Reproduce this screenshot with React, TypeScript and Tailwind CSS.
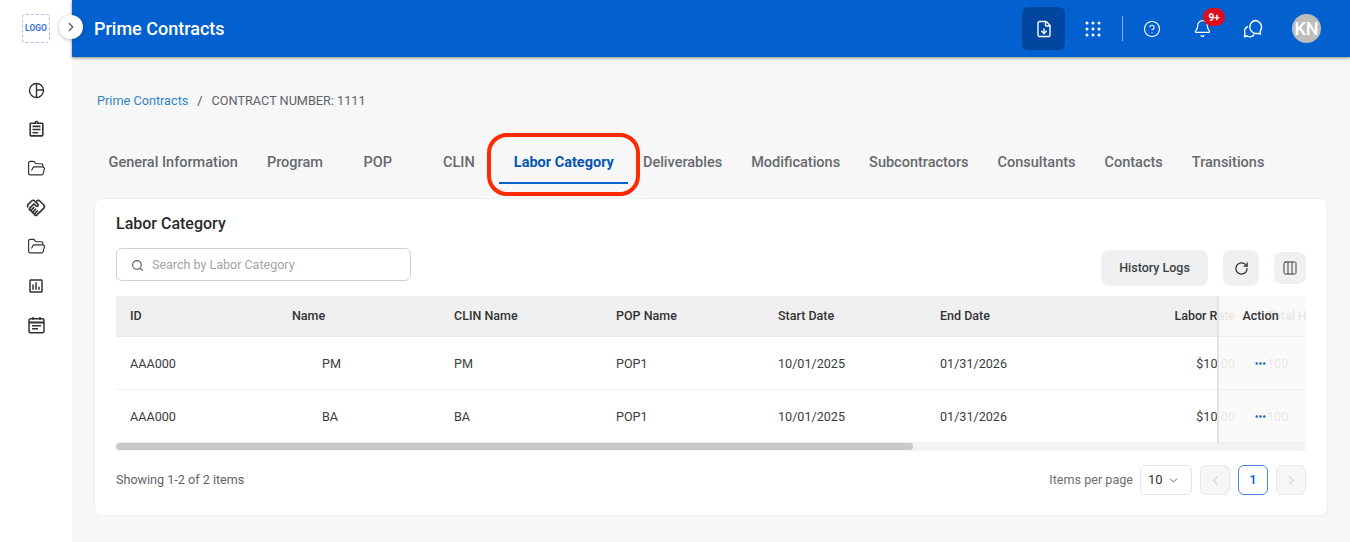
import { ChevronRight, ChevronLeft, ChevronDown, FolderOpen, Search, RotateCw, Columns3, FileDown, CircleHelp, Bell, Ellipsis } from 'lucide-react';
import { MdOutlineAssessment, MdOutlineAssignment, MdOutlineHandshake } from 'react-icons/md';

const tabs = ['General Information', 'Program', 'POP', 'CLIN', 'Labor Category', 'Deliverables', 'Modifications', 'Subcontractors', 'Consultants', 'Contacts', 'Transitions'];

const rows = [
  { id: 'AAA000', name: 'PM', clin: 'PM' },
  { id: 'AAA000', name: 'BA', clin: 'BA' },
];

function PieIcon() {
  return (
    <svg width="17" height="17" viewBox="0 0 17 17" fill="none" stroke="#333" strokeWidth="1.4">
      <circle cx="8.5" cy="8.5" r="7" />
      <path d="M8.5 1.5v14M8.5 8h7" />
    </svg>
  );
}

function CalendarIcon() {
  return (
    <svg width="17" height="18" viewBox="0 0 17 18" fill="none" stroke="#333" strokeWidth="1.5">
      <rect x="1" y="2.8" width="15" height="14" rx="1.5" />
      <path d="M1 6.5h15" strokeWidth="2" />
      <path d="M5 1v3M12 1v3M4 9.8h9M4 12.8h6" />
    </svg>
  );
}

function DotsGrid() {
  return (
    <svg width="16" height="16" viewBox="0 0 16 16" fill="#fff">
      {[2, 8, 14].map((y) => [2, 8, 14].map((x) => <circle key={`${x}-${y}`} cx={x} cy={y} r="1.5" />))}
    </svg>
  );
}

function ChatIcon() {
  return (
    <svg width="20" height="20" viewBox="0 0 20 20" fill="none" stroke="#fff" strokeWidth="1.4" strokeLinejoin="round">
      <path d="M12 1.5a6.6 6.6 0 0 1 6.6 6.6c0 2-.7 3.4-1.6 4.5l.5 2.4-2.7-.6A6.6 6.6 0 1 1 12 1.5z" />
      <path d="M5 7.5a5 5 0 0 0-3 7l-.6 3.2 3-.7a5 5 0 0 0 6.8-1.5" />
    </svg>
  );
}

export default function App() {
  return (
    <div className="flex h-[542px] w-[1350px] overflow-hidden relative bg-[#f7f7f7] font-['Roboto',sans-serif]">
      <aside className="w-[72px] shrink-0 bg-white flex flex-col items-center pt-[14px] relative">
        <div className="w-[28px] h-[29px] rounded-[4px] border border-dashed border-[#a9bdf0] flex items-center justify-center text-[8.5px] font-bold text-[#3f73d8]">
          LOGO
        </div>
        <div className="flex flex-col items-center mt-[28px]">
          <div className="h-[39px] flex items-center justify-center"><PieIcon /></div>
          <div className="h-[39px] flex items-center justify-center"><MdOutlineAssignment size={19} color="#333" /></div>
          <div className="h-[39px] flex items-center justify-center"><FolderOpen size={19} strokeWidth={1.5} color="#333" /></div>
          <div className="h-[39px] flex items-center justify-center"><MdOutlineHandshake size={20} color="#333" /></div>
          <div className="h-[39px] flex items-center justify-center"><FolderOpen size={19} strokeWidth={1.5} color="#333" /></div>
          <div className="h-[39px] flex items-center justify-center"><MdOutlineAssessment size={18} color="#333" /></div>
          <div className="h-[39px] flex items-center justify-center"><CalendarIcon /></div>
        </div>
        <div className="absolute left-[59px] top-[15px] w-[24px] h-[24px] rounded-full bg-white shadow-[0_1px_4px_rgba(0,0,0,0.25)] flex items-center justify-center z-20">
          <ChevronRight size={14} strokeWidth={2.5} color="#666" />
        </div>
      </aside>

      <div className="flex-1 min-w-0 flex flex-col">
        <header className="h-[57px] shrink-0 bg-[#0360cf] shadow-[0_1px_3px_rgba(0,0,0,0.45)] flex items-center pl-[22px] pr-[29px] relative z-10">
          <h1 className="text-[18px] font-medium text-white">Prime Contracts</h1>
          <div className="ml-auto flex items-center">
            <div className="w-[43px] h-[43px] rounded-[6px] bg-[#02479f] flex items-center justify-center">
              <FileDown size={18} strokeWidth={1.8} color="#fff" />
            </div>
            <div className="ml-[20px]"><DotsGrid /></div>
            <div className="ml-[21px] w-px h-[25px] bg-white/50" />
            <div className="ml-[20px]"><CircleHelp size={18} strokeWidth={1.5} color="#fff" /></div>
            <div className="ml-[32px] relative">
              <Bell size={19} strokeWidth={1.5} color="#fff" />
              <span className="absolute left-[10px] top-[-11px] w-[22px] h-[18px] rounded-full bg-[#e00b1c] text-white text-[10px] font-bold flex items-center justify-center">9+</span>
            </div>
            <div className="ml-[31px]"><ChatIcon /></div>
            <div className="ml-[29px] w-[29px] h-[29px] rounded-full bg-[#bdbdbd] flex items-center justify-center text-white text-[18px] font-medium">KN</div>
          </div>
        </header>

        <main className="flex-1 min-h-0 px-[22px] pt-[34px]">
          <nav className="h-[20px] pl-[3px] flex items-center text-[12.7px] text-[#5f6368]">
            <span className="text-[#2f86c6]">Prime Contracts</span>
            <span className="mx-[9px] text-[#555]">/</span>
            <span>CONTRACT NUMBER: 1111</span>
          </nav>

          <div className="mt-[30px] flex h-[43px]">
            {tabs.map((tab) => {
              const active = tab === 'Labor Category';
              return (
                <div
                  key={tab}
                  className={active
                    ? 'relative min-w-[81px] px-[14.5px] pt-[2px] flex items-center justify-center text-[14.5px] font-bold text-[#0656b0] border-b-2 border-[#0360cf]'
                    : 'relative min-w-[81px] px-[14.5px] pt-[2px] flex items-center justify-center text-[14.5px] font-medium text-[#666a6e] border-b-2 border-transparent'}
                >
                  {tab}
                  {active && <div className="absolute left-[-12.5px] right-[-12px] top-[-8px] bottom-[-14px] rounded-[20px] border-[4px] border-[#ff2a00]" />}
                </div>
              );
            })}
          </div>

          <section className="mt-[14px] h-[318px] bg-white rounded-[8px] border border-[#f0f0f0] px-[21px] pt-[13px]">
            <h2 className="text-[16px] leading-[24px] font-medium text-[#2a2a2a]">Labor Category</h2>

            <div className="mt-[12px] flex items-start h-[38px]">
              <div className="w-[295px] h-[33px] rounded-[6px] border border-[#cfcfcf] flex items-center pl-[14px] pt-[1px]">
                <Search size={13} strokeWidth={2} color="#555" />
                <span className="ml-[8px] text-[12.5px] text-[#a3a3a3]">Search by Labor Category</span>
              </div>
              <div className="ml-auto flex items-start">
                <button type="button" className="mt-[2px] w-[107px] h-[36px] rounded-[8px] bg-[#eff0f2] text-[12.5px] font-medium text-[#3c3f44]">History Logs</button>
                <button type="button" className="mt-[2px] ml-[15px] w-[36px] h-[36px] rounded-[8px] bg-[#eff0f2] flex items-center justify-center">
                  <RotateCw size={15} strokeWidth={2} color="#333" />
                </button>
                <button type="button" className="mt-[4px] ml-[15px] w-[32px] h-[32px] rounded-[8px] bg-[#eff0f2] flex items-center justify-center">
                  <Columns3 size={16} strokeWidth={1.4} color="#333" />
                </button>
              </div>
            </div>

            <div className="mt-[10px] relative overflow-hidden text-[12.6px] text-[#3c3c3c]">
              <div className="w-[1400px]">
                <div className="flex h-[41px] items-center bg-[#f0f0f1] text-[12.5px] font-medium text-[#333] border-b border-[#ebebeb]">
                  <div className="w-[162px] pl-[14px]">ID</div>
                  <div className="w-[162px] pl-[14px]">Name</div>
                  <div className="w-[162px] pl-[14px]">CLIN Name</div>
                  <div className="w-[162px] pl-[14px]">POP Name</div>
                  <div className="w-[162px] pl-[14px]">Start Date</div>
                  <div className="w-[162px] pl-[14px]">End Date</div>
                  <div className="w-[165px] pr-[18px] text-right">Labor Rate</div>
                  <div className="pl-[14px]">Total Hours</div>
                </div>
                {rows.map((row) => (
                  <div key={row.name} className="flex h-[53px] pt-[2px] items-center border-b border-[#efefef]">
                    <div className="w-[162px] pl-[14px]">{row.id}</div>
                    <div className="w-[162px] pl-[44px]">{row.name}</div>
                    <div className="w-[162px] pl-[14px]">{row.clin}</div>
                    <div className="w-[162px] pl-[14px]">POP1</div>
                    <div className="w-[162px] pl-[14px]">10/01/2025</div>
                    <div className="w-[162px] pl-[14px]">01/31/2026</div>
                    <div className="w-[165px] pr-[18px] text-right">$10.00</div>
                    <div className="pl-[14px]">100</div>
                  </div>
                ))}
              </div>

              <div className="absolute right-0 top-0 w-[89px] h-[147px] bg-[#fafafa]/90 border-l-2 border-[#e4e4e4] rounded-br-[4px]">
                <div className="h-[41px] pr-[4px] flex items-center justify-center text-[12.5px] font-medium text-[#333] border-b border-[#efefef]">Action</div>
                {rows.map((row) => (
                  <div key={row.name} className="h-[53px] pr-[4px] flex items-center justify-center border-b border-[#efefef]">
                    <Ellipsis size={13} strokeWidth={2.6} color="#0360cf" />
                  </div>
                ))}
              </div>

              <div className="h-[8px] bg-[#f3f3f3] rounded-[4px]">
                <div className="w-[797px] h-[7px] rounded-[4px] bg-[#c9c9c9]" />
              </div>
            </div>

            <div className="mt-[14px] flex items-center h-[30px]">
              <span className="text-[12.6px] text-[#5f6368]">Showing 1-2 of 2 items</span>
              <div className="ml-auto flex items-center">
                <span className="text-[12.6px] text-[#6b6f73]">Items per page</span>
                <div className="ml-[7px] w-[52px] h-[30px] rounded-[6px] border border-[#e6e6e6] flex items-center pl-[7px] text-[13px] text-[#333]">
                  10
                  <ChevronDown size={13} strokeWidth={1.8} color="#666" className="ml-[4px]" />
                </div>
                <div className="ml-[8px] w-[30px] h-[30px] rounded-[6px] border border-[#e8e8ea] bg-[#f5f6f8] flex items-center justify-center">
                  <ChevronLeft size={15} strokeWidth={1.8} color="#d3d5d9" />
                </div>
                <div className="ml-[8px] w-[30px] h-[30px] rounded-[6px] border-[1.5px] border-[#4a86e0] flex items-center justify-center text-[13px] font-medium text-[#0360cf]">1</div>
                <div className="ml-[8px] w-[30px] h-[30px] rounded-[6px] border border-[#e8e8ea] bg-[#f5f6f8] flex items-center justify-center">
                  <ChevronRight size={15} strokeWidth={1.8} color="#d3d5d9" />
                </div>
              </div>
            </div>
          </section>
        </main>
      </div>
    </div>
  );
}
